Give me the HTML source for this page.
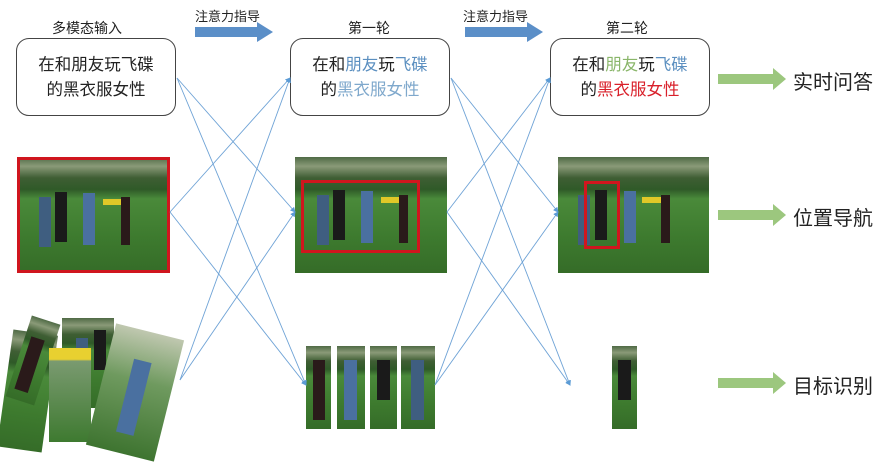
<!DOCTYPE html><html><head><meta charset="utf-8"><style>
body{margin:0;width:893px;height:459px;background:#fff;position:relative;overflow:hidden;font-family:"Liberation Sans","Noto Sans CJK SC",sans-serif;color:#222}
.a{position:absolute}
.box{position:absolute;border:1px solid #444;border-radius:13px;width:160px;height:78px;top:38px;text-align:center;font-size:16.5px;line-height:25px;box-sizing:border-box;padding-top:14px}
.lbl{position:absolute;font-size:14px;top:17px}
.ph{position:absolute;overflow:hidden;background:linear-gradient(#4f6a45 0%,#8a9a78 8%,#3f5e34 18%,#2f5a28 28%,#4a8a3a 36%,#3d7a2e 70%,#356c28 100%)}
.ph i{position:absolute;display:block}
.gr{position:absolute;left:718px;width:55px;height:10px;background:#9cc77e}
.gr:after{content:"";position:absolute;left:55px;top:-6px;border-left:13px solid #9cc77e;border-top:11px solid transparent;border-bottom:11px solid transparent}
.out{position:absolute;left:793px;font-size:20px}
.b{color:#5b8fc0}.g{color:#8ab66a}.r{color:#d9202a}
</style></head><body>
<div class="lbl" style="left:52px;top:18px">多模态输入</div>
<div class="lbl" style="left:195px;top:6px;font-size:13px">注意力指导</div>
<div class="a" style="left:195px;top:27px;width:62px;height:10px;background:#5b8fc8"></div>
<div class="a" style="left:257px;top:22px;border-left:16px solid #5b8fc8;border-top:10px solid transparent;border-bottom:10px solid transparent"></div>
<div class="lbl" style="left:348px;top:18px">第一轮</div>
<div class="lbl" style="left:463px;top:6px;font-size:13px">注意力指导</div>
<div class="a" style="left:465px;top:27px;width:62px;height:10px;background:#5b8fc8"></div>
<div class="a" style="left:527px;top:22px;border-left:16px solid #5b8fc8;border-top:10px solid transparent;border-bottom:10px solid transparent"></div>
<div class="lbl" style="left:606px;top:18px">第二轮</div>

<div class="box" style="left:16px">在和朋友玩飞碟<br>的黑衣服女性</div>
<div class="box" style="left:290px">在和<span class="b">朋友</span>玩<span class="b">飞碟</span><br>的<span class="b" style="color:#7fa8cc">黑衣服女性</span></div>
<div class="box" style="left:550px">在和<span class="g">朋友</span>玩<span class="b">飞碟</span><br>的<span class="r">黑衣服女性</span></div>

<div class="ph" style="left:17px;top:157px;width:153px;height:116px">
<i style="left:22px;top:40px;width:12px;height:50px;background:#3f5e80"></i><i style="left:38px;top:35px;width:12px;height:50px;background:#1a1a1a"></i><i style="left:66px;top:36px;width:12px;height:52px;background:#4a70a0"></i><i style="left:86px;top:42px;width:22px;height:6px;background:#e0c828"></i><i style="left:104px;top:40px;width:9px;height:48px;background:#2a1a1a"></i></div>
<div class="a" style="left:17px;top:157px;width:153px;height:116px;border:3px solid #d0161e;box-sizing:border-box"></div>
<div class="ph" style="left:295px;top:157px;width:152px;height:116px">
<i style="left:22px;top:38px;width:12px;height:50px;background:#3f5e80"></i><i style="left:38px;top:33px;width:12px;height:50px;background:#1a1a1a"></i><i style="left:66px;top:34px;width:12px;height:52px;background:#4a70a0"></i><i style="left:86px;top:40px;width:22px;height:6px;background:#e0c828"></i><i style="left:104px;top:38px;width:9px;height:48px;background:#2a1a1a"></i></div>
<div class="a" style="left:301px;top:180px;width:119px;height:73px;border:3px solid #d0161e;box-sizing:border-box"></div>
<div class="ph" style="left:558px;top:157px;width:151px;height:116px">
<i style="left:20px;top:38px;width:12px;height:50px;background:#3f5e80"></i><i style="left:37px;top:33px;width:12px;height:50px;background:#1a1a1a"></i><i style="left:66px;top:34px;width:12px;height:52px;background:#4a70a0"></i><i style="left:84px;top:40px;width:22px;height:6px;background:#e0c828"></i><i style="left:103px;top:38px;width:9px;height:48px;background:#2a1a1a"></i></div>
<div class="a" style="left:584px;top:181px;width:36px;height:68px;border:3px solid #d0161e;box-sizing:border-box"></div>

<div class="ph" style="left:5px;top:332px;width:45px;height:118px;transform:rotate(8deg)"></div>
<div class="ph" style="left:18px;top:318px;width:30px;height:85px;transform:rotate(18deg)"><i style="left:6px;top:20px;width:14px;height:55px;background:#2a1a1a"></i></div>
<div class="ph" style="left:62px;top:318px;width:52px;height:90px"><i style="left:14px;top:20px;width:12px;height:60px;background:#3f5e80"></i><i style="left:32px;top:12px;width:12px;height:40px;background:#1a1a1a"></i></div>
<div class="ph" style="left:49px;top:348px;width:42px;height:94px;background:linear-gradient(#e8d030 0,#e8d030 12%,#7a9a70 14%,#3e7a30 100%)"></div>
<div class="ph" style="left:100px;top:330px;width:70px;height:125px;transform:rotate(14deg);background:linear-gradient(#c0c8b0,#6f9a5f 40%,#3e7430)"><i style="left:26px;top:30px;width:18px;height:75px;background:#4a70a0"></i></div>
<div class="ph" style="left:306px;top:346px;width:25px;height:83px"><i style="left:7px;top:14px;width:12px;height:60px;background:#2a1a1a"></i></div>
<div class="ph" style="left:337px;top:346px;width:28px;height:83px"><i style="left:7px;top:14px;width:13px;height:60px;background:#4a70a0"></i></div>
<div class="ph" style="left:370px;top:346px;width:27px;height:83px"><i style="left:7px;top:14px;width:13px;height:40px;background:#1a1a1a"></i></div>
<div class="ph" style="left:401px;top:346px;width:34px;height:83px"><i style="left:10px;top:14px;width:13px;height:60px;background:#3f5e80"></i></div>
<div class="ph" style="left:612px;top:346px;width:25px;height:83px"><i style="left:6px;top:14px;width:13px;height:40px;background:#1a1a1a"></i></div>

<svg class="a" style="left:0;top:0" width="893" height="459"><defs><marker id="m" markerWidth="6" markerHeight="6" refX="5" refY="3" orient="auto"><path d="M0,0L6,3L0,6z" fill="#5b9bd5"/></marker></defs>
<g stroke="#6fa3d6" stroke-width="0.9" fill="none" marker-end="url(#m)">
<path d="M177,78L295,212"/><path d="M177,78L306,385"/>
<path d="M170,212L290,78"/><path d="M170,212L306,385"/>
<path d="M180,380L290,78"/><path d="M180,380L295,212"/>
<path d="M451,78L558,212"/><path d="M451,78L570,385"/>
<path d="M447,212L550,78"/><path d="M447,212L570,385"/>
<path d="M435,385L550,78"/><path d="M435,385L558,212"/>
</g></svg>

<div class="gr" style="top:74px"></div><div class="out" style="top:66px">实时问答</div>
<div class="gr" style="top:210px"></div><div class="out" style="top:202px">位置导航</div>
<div class="gr" style="top:378px"></div><div class="out" style="top:370px">目标识别</div>
</body></html>
